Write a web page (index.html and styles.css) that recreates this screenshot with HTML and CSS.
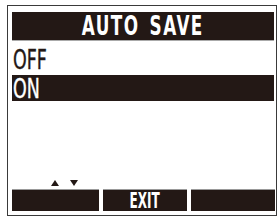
FILE: index.html
```html
<!DOCTYPE html>
<html lang="en">
<head>
    <meta charset="UTF-8">
    <title>Auto Save</title>
    <link rel="stylesheet" href="styles.css">
</head>
<body>

    <div class="screen">
        <div class="title"><span class="squeeze">AUTO SAVE</span></div>

        <div class="option"><span class="squeeze">OFF</span></div>
        <div class="option selected"><span class="squeeze">ON</span></div>

        <div class="spacer"></div>

        <div class="arrows">
            <svg width="30" height="7" viewBox="0 0 30 7">
                <polygon points="0,6 4,0 8,6" fill="#231815"/>
                <polygon points="19,0 27,0 23,6" fill="#231815"/>
            </svg>
        </div>

        <div class="buttons">
            <div class="btn"></div>
            <div class="btn"><span class="squeeze">EXIT</span></div>
            <div class="btn"></div>
        </div>
    </div>

</body>
</html>
```

FILE: styles.css
```css
body {
    margin: 0;
    background-color: #fff;
    font-family: "DejaVu Sans Condensed", "DejaVu Sans", sans-serif;
}
.screen {
    box-sizing: border-box;
    width: 270px;
    height: 211px;
    margin: 5px 0 0 7px;
    border: 1px solid #3a3a3a;
    padding: 6px 2px 4px 4px;
    display: flex;
    flex-direction: column;
}
.squeeze {
    display: inline-block;
}
.title {
    height: 28px;
    background-color: #231815;
    border-bottom: 1px solid #aaa;
    color: #fff;
    font-weight: bold;
    font-size: 26px;
    line-height: 29px;
    text-align: center;
}
.title .squeeze {
    transform: scaleX(0.72);
    letter-spacing: 2px;
    word-spacing: 4px;
}
.option {
    height: 34px;
    color: #231815;
    font-size: 27px;
    line-height: 38px;
    padding-left: 1px;
}
.option .squeeze {
    transform: scaleX(0.72);
    transform-origin: left center;
    -webkit-text-stroke: 0.4px currentColor;
}
.option.selected {
    height: 26px;
    line-height: 28px;
    background-color: #231815;
    color: #fff;
}
.spacer {
    flex: 1;
}
.arrows {
    height: 10px;
    padding-left: 39px;
}
.arrows svg {
    display: block;
    margin-top: 1px;
}
.buttons {
    display: grid;
    grid-template-columns: 87px 84px 84px;
    gap: 4px;
}
.btn {
    height: 21px;
    background-color: #231815;
    border-top: 1px solid #999;
    color: #fff;
    font-weight: bold;
    font-size: 21px;
    line-height: 23px;
    text-align: center;
}
.btn .squeeze {
    transform: scaleX(0.64);
}
```
